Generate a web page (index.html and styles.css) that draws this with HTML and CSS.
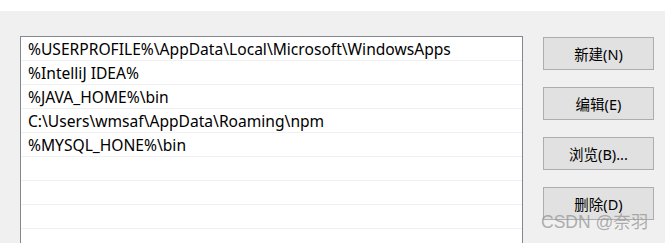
FILE: index.html
```html
<!DOCTYPE html>
<html lang="zh-CN">
<head>
    <meta charset="UTF-8">
    <title>编辑环境变量</title>
    <link rel="stylesheet" href="styles.css">
</head>
<body>
    <div class="topbar"></div>

    <div class="dialog">
        <div class="list">
            <div class="row">%USERPROFILE%\AppData\Local\Microsoft\WindowsApps</div>
            <div class="row">%IntelliJ IDEA%</div>
            <div class="row">%JAVA_HOME%\bin</div>
            <div class="row">C:\Users\wmsaf\AppData\Roaming\npm</div>
            <div class="row">%MYSQL_HONE%\bin</div>
            <div class="row"></div>
            <div class="row"></div>
            <div class="row"></div>
            <div class="row"></div>
        </div>

        <div class="buttons">
            <button class="btn">新建(N)</button>
            <button class="btn">编辑(E)</button>
            <button class="btn">浏览(B)...</button>
            <button class="btn">删除(D)</button>
        </div>
    </div>

    <div class="watermark">CSDN @奈羽</div>
</body>
</html>
```

FILE: styles.css
```css
body {
    margin: 0;
    background-color: #f0f0f0;
    font-family: 'Noto Sans', 'Noto Sans CJK SC', sans-serif;
    height: 243px;
    overflow: hidden;
    position: relative;
}

.topbar {
    height: 11px;
    background-color: #ffffff;
}

.dialog {
    display: flex;
    gap: 20px;
    padding: 25px 0 0 20px;
}

.list {
    width: 501px;
    height: 206px;
    overflow: hidden;
    background-color: #ffffff;
    border: 1px solid #828790;
    border-bottom: none;
}

.row {
    height: 23px;
    border-bottom: 1px solid #f0f0f0;
    padding-left: 7px;
    font-size: 15.6px;
    line-height: 24px;
    color: #000000;
    white-space: nowrap;
}

.buttons {
    display: flex;
    flex-direction: column;
    gap: 17px;
    padding-top: 1px;
}

.btn {
    width: 111px;
    height: 33px;
    background-color: #e1e1e1;
    border: 1px solid #adadad;
    font-family: 'Noto Sans', 'Noto Sans CJK SC', sans-serif;
    font-size: 14.5px;
    color: #000000;
    padding: 0;
}

.watermark {
    position: absolute;
    left: 541px;
    top: 208px;
    font-family: 'Liberation Sans', 'Noto Sans CJK SC', sans-serif;
    font-size: 17.5px;
    color: rgba(150, 150, 150, 0.75);
}
```
